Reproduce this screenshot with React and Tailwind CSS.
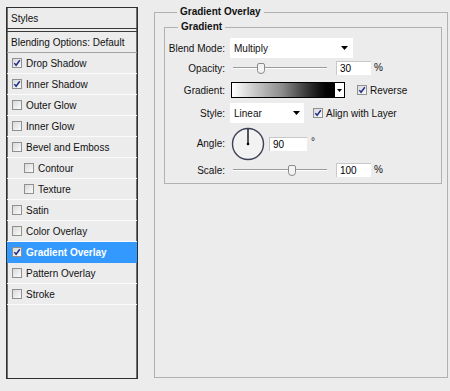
import React from 'react';

const styleItems = [
  { label: 'Drop Shadow', checked: true },
  { label: 'Inner Shadow', checked: true },
  { label: 'Outer Glow' },
  { label: 'Inner Glow' },
  { label: 'Bevel and Emboss' },
  { label: 'Contour', indent: true },
  { label: 'Texture', indent: true },
  { label: 'Satin' },
  { label: 'Color Overlay' },
  { label: 'Gradient Overlay', checked: true, active: true },
  { label: 'Pattern Overlay' },
  { label: 'Stroke' },
];

const CheckBox = ({ checked }) => (
  <span className="w-[10px] h-[10px] shrink-0 border border-[#8f9090] bg-gradient-to-br from-[#d9d9d9] to-[#fbfbfb] flex items-center justify-center">
    {checked && (
      <svg width="8" height="8" viewBox="0 0 8 8">
        <path d="M1.3 4.1 L3.1 6.3 L6.8 1.2" stroke="#1f2f8c" strokeWidth="1.5" fill="none" />
      </svg>
    )}
  </span>
);

const DownArrow = () => (
  <svg width="7" height="4" viewBox="0 0 7 4">
    <path d="M0 0 H7 L3.5 4 Z" fill="#000" />
  </svg>
);

const Slider = ({ pos }) => (
  <div className="w-[100px] h-full flex items-center pl-[3px] pr-[3px]">
    <div className="relative w-full h-[2px] border-t border-[#9c9c9c] border-b border-b-white">
      <svg
        width="8"
        height="11"
        viewBox="0 0 8 11"
        className="absolute top-[-5px]"
        style={{ left: pos - 4 }}
      >
        <path d="M0.5 2 Q0.5 0.5 2 0.5 H6 Q7.5 0.5 7.5 2 V7.5 Q7.5 10.5 4 10.5 Q0.5 10.5 0.5 7.5 Z" fill="#f3f3f3" stroke="#8a8a8a" />
      </svg>
    </div>
  </div>
);

const NumBox = ({ value, w = 'w-[35px]' }) => (
  <div className={`${w} h-full bg-white border-t border-l border-[#c8c8c8] pl-[3px] flex items-center text-black`}>
    {value}
  </div>
);

const Row = ({ label, h, children, mt }) => (
  <div className={`flex items-center ${h} ${mt}`}>
    <div className="w-[61px] text-right pr-px">{label}</div>
    <div className="ml-[4px] flex items-center h-full">{children}</div>
  </div>
);

export default function App() {
  return (
    <div className="w-[450px] h-[391px] bg-[#ececec] flex items-start font-['Liberation_Sans',Arial,sans-serif] text-[10px] text-[#111]">
      {/* styles list */}
      <div className="ml-[6px] mt-[7px] w-[132px] h-[372px] border border-[#2f2f2f] shadow-[inset_1px_0_0_#6f6f6f,inset_-1px_0_0_#6f6f6f] flex flex-col">
        <div className="h-[21px] border-b border-[#3a3a3a] pl-[4px] flex items-center">Styles</div>
        <div className="h-[2px]" />
        <div className="h-[22px] border-t border-[#3a3a3a] border-b border-b-[#a3a3a3] pl-[4px] flex items-center">
          Blending Options: Default
        </div>
        {styleItems.map((it) => (
          <div
            key={it.label}
            className={`h-[21px] shrink-0 flex items-center gap-[4px] border-b ${
              it.active ? 'bg-[#3399ff] border-[#3399ff] text-white font-bold' : 'border-[#fbfbfb]'
            } ${it.indent ? 'pl-[17px]' : 'pl-[5px]'}`}
          >
            <CheckBox checked={it.checked} />
            <span>{it.label}</span>
          </div>
        ))}
      </div>

      {/* gradient overlay settings */}
      <fieldset className="ml-[16px] mt-[6px] w-[294px] h-[372px] border border-[#b1b1b1] pl-[9px]">
        <legend className="ml-[13px] px-[3px] font-bold leading-[12px]">Gradient Overlay</legend>
        <fieldset className="mt-[3px] w-[278px] h-[163px] border border-[#b1b1b1]">
          <legend className="ml-[13px] px-[3px] font-bold leading-[12px]">Gradient</legend>

          <Row label="Blend Mode:" h="h-[20px]" mt="mt-[5px]">
            <div className="w-[123px] h-full bg-white flex items-center justify-between pl-[4px] pr-[5px]">
              <span>Multiply</span>
              <DownArrow />
            </div>
          </Row>

          <Row label="Opacity:" h="h-[14px]" mt="mt-[3px]">
            <Slider pos={28} />
            <div className="ml-[6px] h-full flex items-center">
              <NumBox value="30" />
              <span className="ml-[3px] -mt-[2px]">%</span>
            </div>
          </Row>

          <Row label="Gradient:" h="h-[16px]" mt="mt-[7px]">
            <div className="ml-px w-[114px] h-full border border-black flex">
              <div className="flex-1 bg-gradient-to-r from-white via-[#8a8a8a] to-black" />
              <div className="w-[10px] bg-white border-l border-black flex items-center justify-center">
                <svg width="5" height="3" viewBox="0 0 5 3">
                  <path d="M0 0 H5 L2.5 3 Z" fill="#000" />
                </svg>
              </div>
            </div>
            <div className="ml-[12px] flex items-center gap-[3px]">
              <CheckBox checked />
              <span>Reverse</span>
            </div>
          </Row>

          <Row label="Style:" h="h-[20px]" mt="mt-[5px]">
            <div className="w-[74px] h-full bg-white flex items-center justify-between pl-[4px] pr-[4px]">
              <span>Linear</span>
              <DownArrow />
            </div>
            <div className="ml-[9px] flex items-center gap-[3px]">
              <CheckBox checked />
              <span>Align with Layer</span>
            </div>
          </Row>

          <Row label="Angle:" h="h-[33px]" mt="mt-[4px]">
            <svg width="34" height="34" viewBox="0 0 34 34" className="ml-px">
              <circle cx="17" cy="17" r="15.5" fill="#f2f2f2" stroke="#3d4158" strokeWidth="1.4" />
              <line x1="17" y1="17" x2="17" y2="2" stroke="#000" strokeWidth="1.3" />
              <circle cx="17" cy="17" r="1.3" fill="#000" />
            </svg>
            <div className="ml-[4px] h-[14px] flex items-start">
              <NumBox value="90" w="w-[38px]" />
              <span className="ml-[4px] -mt-[3px]">°</span>
            </div>
          </Row>

          <Row label="Scale:" h="h-[14px]" mt="mt-[3px]">
            <Slider pos={59} />
            <div className="ml-[6px] h-full flex items-center">
              <NumBox value="100" />
              <span className="ml-[3px] -mt-[2px]">%</span>
            </div>
          </Row>
        </fieldset>
      </fieldset>
    </div>
  );
}
